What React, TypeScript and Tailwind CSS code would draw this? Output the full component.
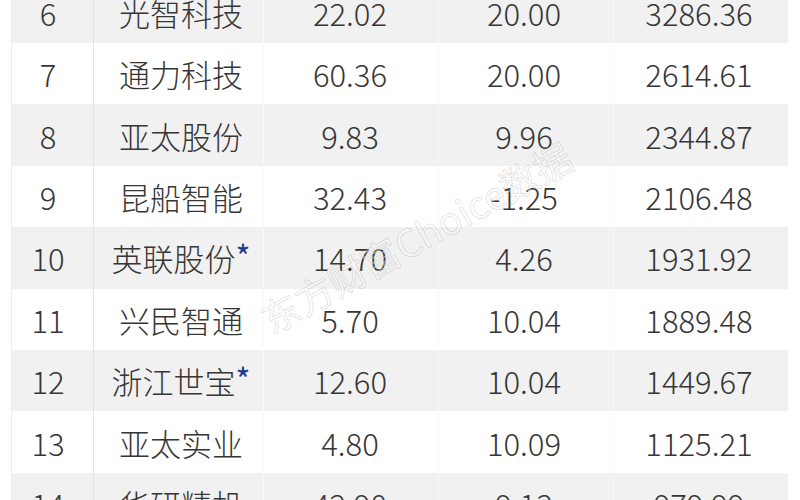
import React from "react";

type Row = { rank: number; name: string; star?: boolean; a: string; b: string; c: string };

const rows: Row[] = [
  { rank: 6, name: "光智科技", a: "22.02", b: "20.00", c: "3286.36" },
  { rank: 7, name: "通力科技", a: "60.36", b: "20.00", c: "2614.61" },
  { rank: 8, name: "亚太股份", a: "9.83", b: "9.96", c: "2344.87" },
  { rank: 9, name: "昆船智能", a: "32.43", b: "-1.25", c: "2106.48" },
  { rank: 10, name: "英联股份", star: true, a: "14.70", b: "4.26", c: "1931.92" },
  { rank: 11, name: "兴民智通", a: "5.70", b: "10.04", c: "1889.48" },
  { rank: 12, name: "浙江世宝", star: true, a: "12.60", b: "10.04", c: "1449.67" },
  { rank: 13, name: "亚太实业", a: "4.80", b: "10.09", c: "1125.21" },
  { rank: 14, name: "华研精机", a: "42.90", b: "9.13", c: "979.99" },
];

export default function App() {
  return (
    <div
      className="relative w-[800px] h-[500px] overflow-hidden bg-white text-[#363636]"
      style={{ fontFamily: '"Noto Sans CJK SC", "Noto Sans", sans-serif' }}
    >
      <div className="ml-[11px] w-[777px] mt-[-18.4px] border-l border-[#ececec] flex flex-col">
        {rows.map((r, i) => (
          <div
            key={r.rank}
            className={`flex h-[61.4px] items-center text-[31px] leading-none font-light ${
              i % 2 === 0 ? "bg-[#f1f1f1]" : "bg-white"
            }`}
          >
            <div className="w-[82px] h-full flex items-center justify-center pr-[9px] border-r border-[#e3e3e3]">
              {r.rank}
            </div>
            <div className="w-[170px] h-full flex items-center justify-center pl-[5px] border-r border-[#f8f8f8]">
              <span>{r.name}</span>
              {r.star && (
                <span className="relative -top-[3px] text-[32px] text-[#1e3b8c] font-normal">*</span>
              )}
            </div>
            <div className="w-[175px] h-full flex items-center justify-center pr-[2px] border-r border-[#f8f8f8]">
              {r.a}
            </div>
            <div className="w-[175px] h-full flex items-center justify-center pr-[4px] border-r border-[#f8f8f8]">
              {r.b}
            </div>
            <div className="flex-1 h-full flex items-center justify-center pr-[4px]">{r.c}</div>
          </div>
        ))}
      </div>

      <div className="absolute left-[416px] top-[237px] pointer-events-none">
        <div className="-translate-x-1/2 -translate-y-1/2 -rotate-[29deg] whitespace-nowrap text-[38px] leading-none text-[rgba(255,255,255,0.4)] [-webkit-text-stroke:1px_rgba(0,0,0,0.12)]">
          东方财富Choice数据
        </div>
      </div>
    </div>
  );
}
